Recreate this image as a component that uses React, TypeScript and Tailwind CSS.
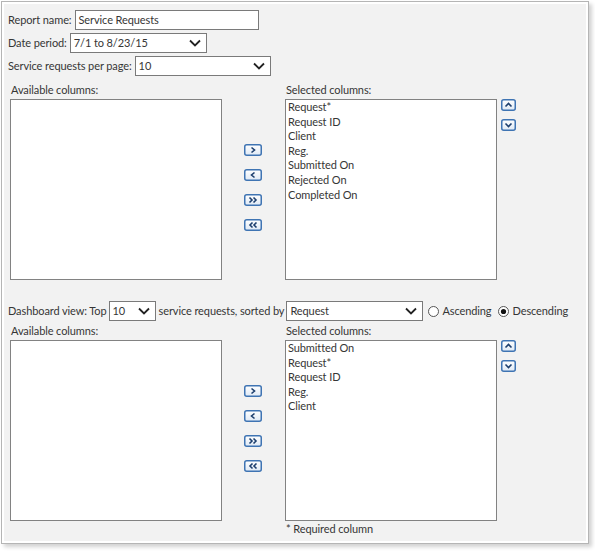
import React from "react";

const font = { fontFamily: 'Lato, "Open Sans", sans-serif' };

function Chevron() {
  return (
    <svg width="12" height="8" viewBox="0 0 12 8" className="shrink-0">
      <polyline points="1,1.5 6,6.5 11,1.5" fill="none" stroke="#222" strokeWidth="1.8" />
    </svg>
  );
}

function Select({ w, value }: { w: string; value: string }) {
  return (
    <div className={`${w} h-[20px] shrink-0 bg-white border border-[#7a7a7a] flex items-center justify-between pl-[3px] pr-[5px]`}>
      <span>{value}</span>
      <Chevron />
    </div>
  );
}

type Kind = "r" | "l" | "rr" | "ll" | "u" | "d";

function ArrowBtn({ kind }: { kind: Kind }) {
  const small = kind === "u" || kind === "d";
  const w = small ? 15 : 18;
  const h = 12;
  const cx = w / 2;
  const cy = h / 2;
  let paths: string[] = [];
  if (kind === "r") paths = [`M${cx - 1.5},${cy - 2.5} L${cx + 1.5},${cy} L${cx - 1.5},${cy + 2.5}`];
  if (kind === "l") paths = [`M${cx + 1.5},${cy - 2.5} L${cx - 1.5},${cy} L${cx + 1.5},${cy + 2.5}`];
  if (kind === "rr")
    paths = [
      `M${cx - 3.5},${cy - 2.5} L${cx - 1},${cy} L${cx - 3.5},${cy + 2.5}`,
      `M${cx + 0.5},${cy - 2.5} L${cx + 3},${cy} L${cx + 0.5},${cy + 2.5}`,
    ];
  if (kind === "ll")
    paths = [
      `M${cx - 0.5},${cy - 2.5} L${cx - 3},${cy} L${cx - 0.5},${cy + 2.5}`,
      `M${cx + 3.5},${cy - 2.5} L${cx + 1},${cy} L${cx + 3.5},${cy + 2.5}`,
    ];
  if (kind === "u") paths = [`M${cx - 3},${cy + 1.5} L${cx},${cy - 1.5} L${cx + 3},${cy + 1.5}`];
  if (kind === "d") paths = [`M${cx - 3},${cy - 1.5} L${cx},${cy + 1.5} L${cx + 3},${cy - 1.5}`];
  return (
    <svg width={w} height={h} viewBox={`0 0 ${w} ${h}`} className="block">
      <defs>
        <linearGradient id={`g${kind}`} x1="0" y1="0" x2="0" y2="1">
          <stop offset="0" stopColor="#ffffff" />
          <stop offset="1" stopColor="#dfe9f5" />
        </linearGradient>
      </defs>
      <rect x="0.75" y="0.75" width={w - 1.5} height={h - 1.5} rx="2" fill={`url(#g${kind})`} stroke="#3f74b3" strokeWidth="1.5" />
      {paths.map((d, i) => (
        <path key={i} d={d} fill="none" stroke="#1d3f6e" strokeWidth="1.6" />
      ))}
    </svg>
  );
}

function Radio({ checked }: { checked?: boolean }) {
  return (
    <svg width="11" height="11" viewBox="0 0 11 11" className="shrink-0">
      <circle cx="5.5" cy="5.5" r="5" fill="#fff" stroke="#555" strokeWidth="1" />
      {checked && <circle cx="5.5" cy="5.5" r="2.6" fill="#111" />}
    </svg>
  );
}

function Columns({ items, footer }: { items: string[]; footer?: boolean }) {
  return (
    <div className="flex ml-[2px]">
      <div className="flex flex-col">
        <div className="h-[14px] leading-[14px] pl-[1px] mb-[2px]">Available columns:</div>
        <div className="w-[212px] h-[181px] bg-white border border-[#828282]" />
      </div>
      <div className="w-[63px] flex flex-col items-center pt-[61px] gap-[13px] pr-[2px]">
        <ArrowBtn kind="r" />
        <ArrowBtn kind="l" />
        <ArrowBtn kind="rr" />
        <ArrowBtn kind="ll" />
      </div>
      <div className="flex flex-col">
        <div className="h-[14px] leading-[14px] pl-[1px] mb-[2px]">Selected columns:</div>
        <div className="w-[212px] h-[181px] bg-white border border-[#828282] pl-[2px]">
          {items.map((t) => (
            <div key={t} className="leading-[14.6px]">
              {t}
            </div>
          ))}
        </div>
        {footer && <div className="leading-[14px] mt-[1px] pl-[1px]">* Required column</div>}
      </div>
      <div className="flex flex-col gap-[8px] pt-[16px] pl-[4px]">
        <ArrowBtn kind="u" />
        <ArrowBtn kind="d" />
      </div>
    </div>
  );
}

export default function App() {
  return (
    <div style={font} className="text-[11px] tracking-[-0.1px] text-[#363636] bg-white w-[595px] h-[552px] whitespace-nowrap">
      <div className="ml-[1px] mt-[1px] w-[588px] h-[543px] border border-[#b5b5b5] bg-white p-[2px] shadow-[3px_3px_4px_rgba(0,0,0,0.18)]">
        <div className="h-full bg-[#f2f2f2] pl-[4px] pt-[6px]">
          <div className="flex items-center h-[20px]">
            <span>Report name:</span>
            <div className="ml-[3px] w-[184px] h-[20px] bg-white border border-[#7a7a7a] pl-[3px] flex items-center">
              Service Requests
            </div>
          </div>
          <div className="flex items-center h-[20px] mt-[3px]">
            <span className="mr-[3px]">Date period:</span>
            <Select w="w-[137px]" value="7/1 to 8/23/15" />
          </div>
          <div className="flex items-center h-[20px] mt-[3px]">
            <span className="mr-[3px]">Service requests per page:</span>
            <Select w="w-[136px]" value="10" />
          </div>
          <div className="mt-[7px]">
            <Columns items={["Request*", "Request ID", "Client", "Reg.", "Submitted On", "Rejected On", "Completed On"]} />
          </div>
          <div className="flex items-center h-[20px] mt-[21px]">
            <span className="mr-[2px]">Dashboard view: Top</span>
            <Select w="w-[47px]" value="10" />
            <span className="ml-[3px] mr-[2px]">service requests, sorted by</span>
            <Select w="w-[137px]" value="Request" />
            <span className="ml-[5px] flex items-center gap-[3px]">
              <Radio />
              Ascending
            </span>
            <span className="ml-[7px] flex items-center gap-[3px]">
              <Radio checked />
              Descending
            </span>
          </div>
          <div className="mt-[3px]">
            <Columns items={["Submitted On", "Request*", "Request ID", "Reg.", "Client"]} footer />
          </div>
        </div>
      </div>
    </div>
  );
}
